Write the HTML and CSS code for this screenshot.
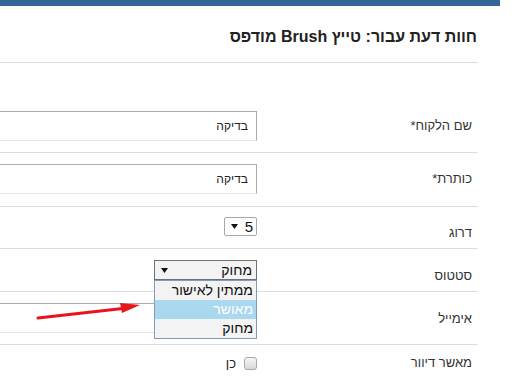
FILE: index.html
```html
<!DOCTYPE html>
<html lang="he">
<head>
  <meta charset="UTF-8">
  <meta name="viewport" content="width=device-width, initial-scale=1.0">
  <link rel="stylesheet" href="styles.css">
</head>
<body>

  <div class="topbar"></div>

  <div class="page" dir="rtl">
    <h2 class="title">חוות דעת עבור: טייץ Brush מודפס</h2>

    <div class="row row-first">
      <div class="label">שם הלקוח*</div>
      <div class="field"><input class="textbox" type="text" value="בדיקה"></div>
    </div>

    <div class="row row-title">
      <div class="label">כותרת*</div>
      <div class="field"><input class="textbox" type="text" value="בדיקה"></div>
    </div>

    <div class="row row-rating">
      <div class="label">דרוג</div>
      <div class="field">
        <div class="small-select">
          <span>5</span>
          <svg class="caret" width="7" height="5" viewBox="0 0 7 5"><path d="M0 0H7L3.5 5Z"/></svg>
        </div>
      </div>
    </div>

    <div class="row row-status">
      <div class="label">סטטוס</div>
      <div class="field">
        <div class="status-select">
          <span>מחוק</span>
          <svg class="caret" width="7" height="5" viewBox="0 0 7 5"><path d="M0 0H7L3.5 5Z"/></svg>
          <!-- the opened list, drawn over the email row -->
          <ul class="options">
            <li>ממתין לאישור</li>
            <li class="selected">מאושר</li>
            <li>מחוק</li>
          </ul>
        </div>
      </div>
    </div>

    <div class="row row-email">
      <div class="label">אימייל</div>
      <div class="field"><input class="textbox" type="text" value="test@gmail.com"></div>
    </div>

    <div class="row row-last">
      <div class="label">מאשר דיוור</div>
      <div class="field">
        <label class="check"><span class="box"></span>כן</label>
      </div>
    </div>
  </div>

  <svg class="arrow" width="110" height="20" viewBox="0 0 110 20">
    <line x1="3" y1="16" x2="92" y2="6" stroke="#e8141b" stroke-width="3" stroke-linecap="round"/>
    <path d="M85 1L105 3L87 11Z" fill="#e8141b"/>
  </svg>

</body>
</html>
```

FILE: styles.css
```css
body {
  margin: 0;
  font-family: "Liberation Sans", Arial, sans-serif;
  color: #333;
  background-color: #fff;
  overflow: hidden;
}

.topbar {
  width: 500px;
  height: 6px;
  background-color: #336699;
}

.page {
  width: 578px;
  margin-left: -100px;
}

.title {
  margin: 0;
  padding: 22px 1px 16px 0;
  font-size: 16px;
  line-height: 18px;
  font-weight: bold;
  color: #222;
  border-bottom: 1px solid #ddd;
}

.row {
  display: flex;
  box-sizing: border-box;
  padding-top: 11px;
  border-bottom: 1px solid #ddd;
}

.row-first {
  height: 90px;
  padding-top: 48px;
}

.row-title {
  height: 54px;
}

.row-rating {
  height: 42px;
  padding-top: 10px;
}

.row-status {
  height: 43px;
}

.row-email {
  height: 53px;
}

.row-last {
  height: 40px;
  padding-top: 10px;
  border-bottom: none;
}

.label {
  width: 215px;
  padding: 7px 6px 0 0;
  font-size: 13px;
  line-height: 15px;
  text-align: right;
}

.row-rating .label,
.row-status .label,
.row-email .label {
  padding-top: 8px;
}

.row-last .label {
  padding-top: 0;
}

.field {
  width: 357px;
}

.textbox {
  display: block;
  box-sizing: border-box;
  width: 100%;
  height: 30px;
  margin: 0;
  padding: 0 8px;
  font-family: "Liberation Sans", Arial, sans-serif;
  font-size: 12px;
  color: #222;
  background-color: #fff;
  border: 1px solid;
  border-color: #ababab #ababab #e3e3e3 #e3e3e3;
  outline: none;
}

.caret {
  fill: #111;
}

.small-select {
  display: flex;
  align-items: center;
  justify-content: space-between;
  box-sizing: border-box;
  width: 33px;
  height: 19px;
  padding: 0 3px 0 6px;
  font-size: 15px;
  color: #111;
  border: 1px solid #a8a8a8;
  border-radius: 2px;
}

.status-select {
  position: relative;
  display: flex;
  align-items: center;
  justify-content: space-between;
  box-sizing: border-box;
  width: 103px;
  height: 20px;
  padding: 0 4px 0 6px;
  font-size: 14px;
  color: #111;
  background-color: #f3f3f3;
  border: 1px solid #707070;
}

.options {
  position: absolute;
  top: 19px;
  right: -1px;
  z-index: 2;
  width: 103px;
  box-sizing: border-box;
  margin: 0;
  padding: 0;
  list-style: none;
  background-color: #f3f3f3;
  border: 1px solid #7f9db9;
}

.options li {
  height: 19px;
  line-height: 19px;
  padding-right: 3px;
  font-size: 14px;
  color: #111;
}

.options li.selected {
  background-color: #aad8ef;
  color: #fff;
}

.check {
  display: flex;
  align-items: center;
  gap: 8px;
  margin-top: 1px;
  font-size: 13px;
  line-height: 15px;
  color: #222;
}

.box {
  box-sizing: border-box;
  width: 13px;
  height: 13px;
  border: 1px solid #a9a9a9;
  border-radius: 3px;
  background: linear-gradient(#f6f6f6, #d9d9d9);
}

.arrow {
  position: absolute;
  left: 35px;
  top: 302px;
}
```
